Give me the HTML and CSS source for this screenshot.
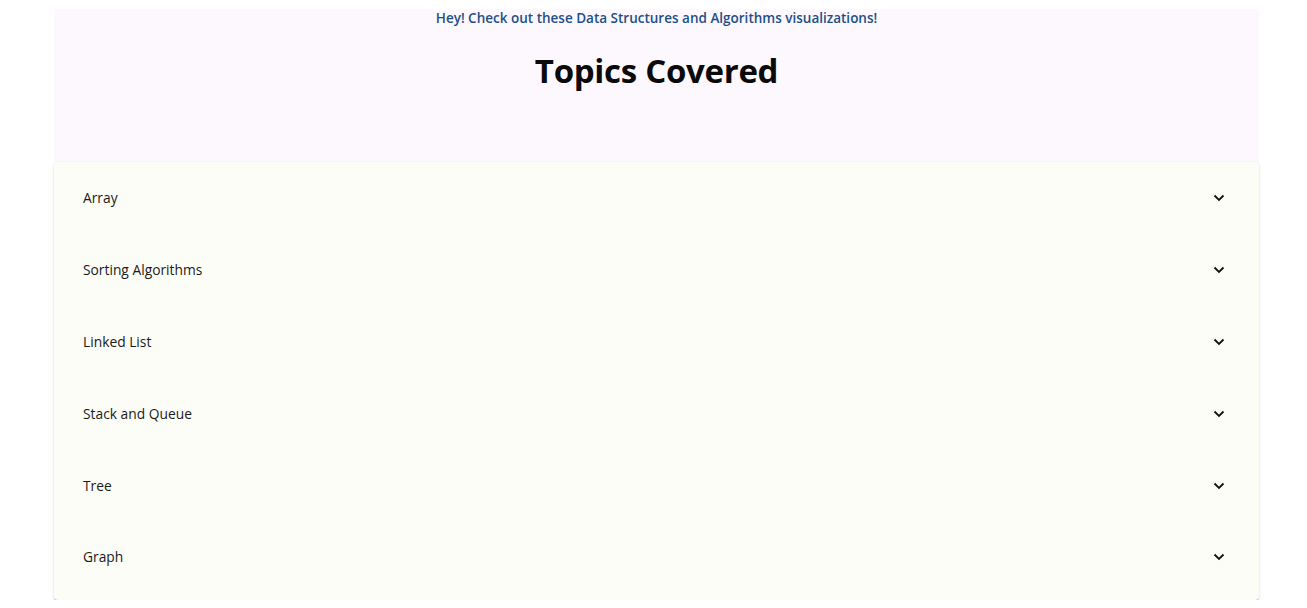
FILE: index.html
```html
<!DOCTYPE html>
<html>
<head>
<meta charset="utf-8">
<link rel="stylesheet" href="styles.css">
</head>
<body>
<div class="page">
  <header class="hero">
    <p class="tagline">Hey! Check out these Data Structures and Algorithms visualizations!</p>
    <h1 class="title">Topics Covered</h1>
  </header>
  <section class="accordion">
    <div class="item"><span class="label">Array</span><svg class="chev" viewBox="0 0 12 8"><path d="M1.5 1.5 L6 6 L10.5 1.5" /></svg></div>
    <div class="item"><span class="label">Sorting Algorithms</span><svg class="chev" viewBox="0 0 12 8"><path d="M1.5 1.5 L6 6 L10.5 1.5" /></svg></div>
    <div class="item"><span class="label">Linked List</span><svg class="chev" viewBox="0 0 12 8"><path d="M1.5 1.5 L6 6 L10.5 1.5" /></svg></div>
    <div class="item"><span class="label">Stack and Queue</span><svg class="chev" viewBox="0 0 12 8"><path d="M1.5 1.5 L6 6 L10.5 1.5" /></svg></div>
    <div class="item"><span class="label">Tree</span><svg class="chev" viewBox="0 0 12 8"><path d="M1.5 1.5 L6 6 L10.5 1.5" /></svg></div>
    <div class="item last"><span class="label">Graph</span><svg class="chev" viewBox="0 0 12 8"><path d="M1.5 1.5 L6 6 L10.5 1.5" /></svg></div>
  </section>
</div>
</body>
</html>
```
FILE: styles.css
```css
html, body {
  margin: 0;
  padding: 0;
  background: #ffffff;
}
body {
  font-family: "Open Sans", "Noto Sans", sans-serif;
  color: #111;
}
.page {
  width: 1205px;
  margin: 9px 0 0 54px;
}
.hero {
  background: #fdf8fe;
  height: 153px;
  display: flex;
  flex-direction: column;
  align-items: center;
  box-sizing: border-box;
}
.tagline {
  margin: 0;
  font-size: 13.5px;
  font-weight: 600;
  color: #1d4f87;
  line-height: 18px;
}
.title {
  margin: 24px 0 0;
  font-size: 33px;
  font-weight: 700;
  color: #0a0a0a;
  line-height: 40px;
  letter-spacing: -0.3px;
}
.accordion {
  background: #fdfdf8;
  border-radius: 4px;
  box-shadow: 0 2px 1px -1px rgba(0,0,0,0.2), 0 1px 1px 0 rgba(0,0,0,0.14), 0 1px 3px 0 rgba(0,0,0,0.12);
  display: flex;
  flex-direction: column;
}
.item {
  height: 72px;
  display: flex;
  align-items: center;
  justify-content: space-between;
  padding: 0 34px 2px 29px;
  box-sizing: border-box;
}
.item.last {
  height: 78px;
  padding-bottom: 10px;
}
.label {
  font-size: 13.8px;
  color: #1a1a1a;
}
.chev {
  width: 12px;
  height: 8px;
  margin-top: 1px;
}
.chev path {
  fill: none;
  stroke: #111;
  stroke-width: 1.8;
}
```
